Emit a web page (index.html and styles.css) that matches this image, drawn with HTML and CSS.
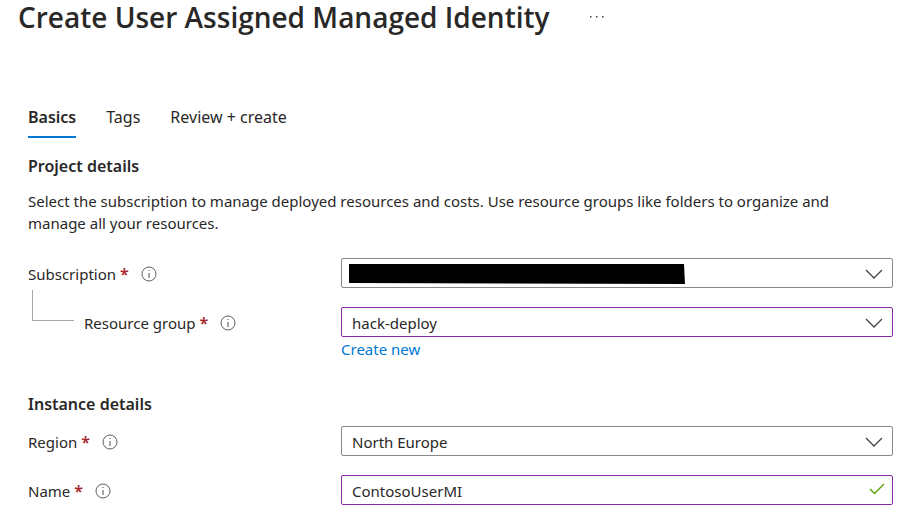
FILE: index.html
```html
<!DOCTYPE html>
<html lang="en">
<head>
<meta charset="utf-8">
<meta name="viewport" content="width=device-width, initial-scale=1">
<title>Create User Assigned Managed Identity</title>
<link rel="stylesheet" href="styles.css">
</head>
<body>
<svg class="sprite" aria-hidden="true">
  <symbol id="info" viewBox="0 0 16 16">
    <circle cx="8" cy="8" r="7" fill="none" stroke="currentColor"/>
    <path d="M8 7v5M8 4v1" fill="none" stroke="currentColor" stroke-width="1.1"/>
  </symbol>
  <symbol id="chevron" viewBox="0 0 18 10">
    <path d="M1 1l8 8 8-8" fill="none" stroke="currentColor" stroke-width="1.3"/>
  </symbol>
  <symbol id="check" viewBox="0 0 16 12">
    <path d="M1 6l4.500 4.500L15 1" fill="none" stroke="currentColor" stroke-width="1.400"/>
  </symbol>
</svg>
<header class="title-bar">
  <h1 class="title">Create User Assigned Managed Identity</h1>
  <button class="more" type="button" aria-label="More">
    <svg width="16" height="4" viewBox="0 0 16 4" fill="currentColor"><path d="M1 1h1.500v1.500H1zM7 1h1.500v1.500H7zM13 1h1.500v1.500H13z"/></svg>
  </button>
</header>
<main class="content">
  <nav class="tabs">
    <a class="tab tab-active" href="#basics">Basics</a>
    <a class="tab" href="#tags">Tags</a>
    <a class="tab" href="#review">Review + create</a>
  </nav>
  <form class="form" id="basics">
    <section class="section">
      <h2 class="heading">Project details</h2>
      <p class="intro">Select the subscription to manage deployed resources and costs. Use resource groups like folders to organize and manage all your resources.</p>
      <div class="row">
        <div class="label-cell">
          <label for="subscription">Subscription <span class="required">*</span></label>
          <svg class="info"><use href="#info"/></svg>
        </div>
        <div class="control">
          <select class="field" id="subscription"><option></option></select>
          <svg class="redaction" viewBox="0 0 336 20" preserveAspectRatio="none"><path d="M0 0h335l1 20L0 19z"/></svg>
          <svg class="chevron"><use href="#chevron"/></svg>
        </div>
      </div>
      <div class="row">
        <div class="label-cell nested">
          <label for="group">Resource group <span class="required">*</span></label>
          <svg class="info"><use href="#info"/></svg>
        </div>
        <div class="control">
          <select class="field edited" id="group"><option>hack-deploy</option></select>
          <svg class="chevron"><use href="#chevron"/></svg>
        </div>
        <a class="create" href="#new">Create new</a>
      </div>
    </section>
    <section class="section">
      <h2 class="heading">Instance details</h2>
      <div class="row">
        <div class="label-cell">
          <label for="region">Region <span class="required">*</span></label>
          <svg class="info"><use href="#info"/></svg>
        </div>
        <div class="control">
          <select class="field" id="region"><option>North Europe</option></select>
          <svg class="chevron"><use href="#chevron"/></svg>
        </div>
      </div>
      <div class="row">
        <div class="label-cell">
          <label for="name">Name <span class="required">*</span></label>
          <svg class="info"><use href="#info"/></svg>
        </div>
        <div class="control">
          <input class="field edited" id="name" type="text" value="ContosoUserMI">
          <svg class="check"><use href="#check"/></svg>
        </div>
      </div>
    </section>
  </form>
</main>
</body>
</html>
```
FILE: styles.css
```css
* {
  box-sizing: border-box;
}

body {
  margin: 0;
  background: #fff;
  color: #292827;
  font: 15px/22px "Noto Sans", "Open Sans", sans-serif;
}

.sprite {
  display: none;
}

.title-bar {
  display: flex;
  align-items: center;
  gap: 32px;
  padding: 0 18px;
}

.title {
  margin: 0;
  font-size: 28px;
  line-height: 34px;
  font-weight: 600;
  font-family: "Open Sans", "Noto Sans", sans-serif;
}

.more {
  display: flex;
  padding: 0 7px;
  border: 0;
  background: none;
  color: #444;
}

.content {
  padding: 70px 17px 20px 28px;
}

.tabs {
  display: flex;
  gap: 30px;
  font-size: 16px;
}

.tab {
  padding: 2px 0 8px;
  border-bottom: 2px solid transparent;
  color: inherit;
  text-decoration: none;
}

.tab-active {
  border-color: #0078d4;
  font-weight: 600;
}

.section {
  margin-top: 16px;
}

.section + .section {
  margin-top: 32px;
}

.heading {
  margin: 0;
  font-size: 16px;
  line-height: 24px;
  font-weight: 600;
}

.intro {
  max-width: 830px;
  margin: 12px 0 24px;
}

.row {
  display: grid;
  grid-template-columns: 313px 1fr;
}

.row + .row {
  margin-top: 19px;
}

.heading + .row {
  margin-top: 10px;
}

.label-cell {
  display: flex;
  align-items: center;
  gap: 12px;
  padding-top: 1px;
}

.nested {
  position: relative;
  padding-left: 56px;
}

.nested::before {
  content: "";
  position: absolute;
  left: 4px;
  bottom: 16px;
  width: 41px;
  height: 30px;
  border: solid #a6a6a6;
  border-width: 0 0 1px 1px;
}

.required {
  color: #a4262c;
  font-size: 16px;
  font-weight: 600;
}

.info {
  width: 16px;
  height: 16px;
  color: #605e5c;
}

.control {
  position: relative;
}

.field {
  display: block;
  width: 100%;
  height: 30px;
  margin: 0;
  padding: 1px 40px 0 10px;
  border: 1px solid #8a8886;
  border-radius: 2px;
  appearance: none;
  background: #fff;
  color: inherit;
  font: inherit;
}

.edited {
  border-color: #8a2da5;
}

.redaction {
  position: absolute;
  top: 6px;
  left: 8px;
  width: 336px;
  height: 20px;
}

.chevron {
  position: absolute;
  top: 11px;
  right: 10px;
  width: 18px;
  height: 10px;
  color: #444;
  pointer-events: none;
}

.check {
  position: absolute;
  top: 8px;
  right: 8px;
  width: 16px;
  height: 12px;
  color: #57a300;
}

.create {
  grid-column: 2;
  justify-self: start;
  margin-top: 1px;
  color: #0078d4;
  text-decoration: none;
}
```
